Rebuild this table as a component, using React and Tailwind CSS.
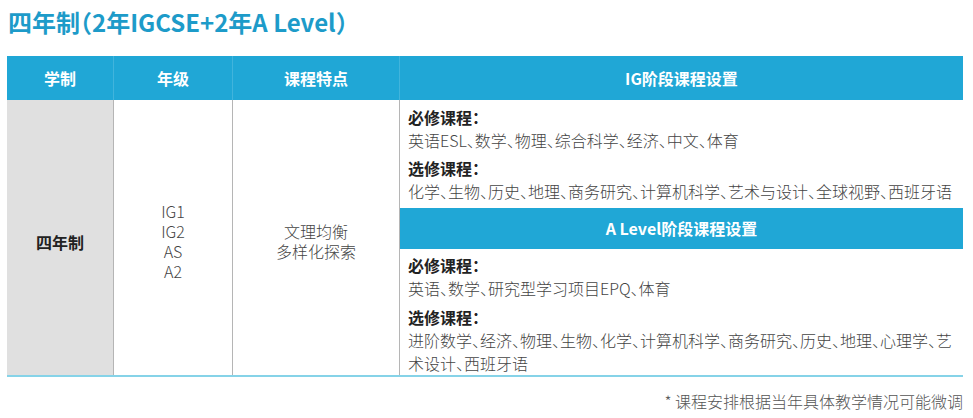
import React from "react";

const F = { fontFamily: '"Noto Sans CJK SC", "Noto Sans", sans-serif' };

export default function App() {
  return (
    <div
      className="w-[973px] h-[418px] bg-white overflow-hidden [font-feature-settings:'halt']"
      style={F}
    >
      <div className="pt-[6px] pl-[8px] text-[24px] leading-[32px] font-bold text-[#1d9bc9]">
        四年制（2年IGCSE+2年A Level）
      </div>

      <div className="ml-[7px] mt-[18px] w-[956px]">
        {/* header */}
        <div className="grid grid-cols-[107px_119px_167px_1fr] h-[44px] bg-[#20a7d6] text-white font-bold text-[16px]">
          <div className="flex items-center justify-center border-r border-white/15">学制</div>
          <div className="flex items-center justify-center border-r border-white/15">年级</div>
          <div className="flex items-center justify-center border-r border-white/15">课程特点</div>
          <div className="flex items-center justify-center">IG阶段课程设置</div>
        </div>

        {/* body */}
        <div className="grid grid-cols-[107px_119px_167px_1fr] border-b-2 border-[#86d3e8]">
          <div className="bg-[#e0e0e0] border-r border-[#b5b5b5] flex items-center justify-center pt-[9px] text-[16px] font-bold text-[#222]">
            四年制
          </div>
          <div className="border-r border-[#b5b5b5] flex flex-col items-center justify-center pt-[7px] text-[16px] leading-[20px] font-light text-[#444]">
            <div>IG1</div>
            <div>IG2</div>
            <div>AS</div>
            <div>A2</div>
          </div>
          <div className="border-r border-[#b5b5b5] flex flex-col items-center justify-center pt-[7px] text-[16px] leading-[20px] font-light text-[#444]">
            <div>文理均衡</div>
            <div>多样化探索</div>
          </div>
          <div className="flex flex-col text-[16px] leading-[23px]">
            <div className="pl-[8px] pr-[10px] pt-[6px] pb-[5px] whitespace-nowrap">
              <div className="font-bold text-[#222]">必修课程：</div>
              <div className="font-light text-[#444]">英语ESL、数学、物理、综合科学、经济、中文、体育</div>
              <div className="mt-[5px] font-bold text-[#222]">选修课程：</div>
              <div className="font-light text-[#444]">
                化学、生物、历史、地理、商务研究、计算机科学、艺术与设计、全球视野、西班牙语
              </div>
            </div>
            <div className="h-[41px] bg-[#20a7d6] flex items-center justify-center text-white font-bold">
              A Level阶段课程设置
            </div>
            <div className="pl-[8px] pr-[10px] pt-[5px] whitespace-nowrap">
              <div className="font-bold text-[#222]">必修课程：</div>
              <div className="font-light text-[#444]">英语、数学、研究型学习项目EPQ、体育</div>
              <div className="mt-[6px] font-bold text-[#222]">选修课程：</div>
              <div className="font-light text-[#444]">
                进阶数学、经济、物理、生物、化学、计算机科学、商务研究、历史、地理、心理学、艺
                <br />
                术设计、西班牙语
              </div>
            </div>
          </div>
        </div>

        <div className="mt-[13px] text-right text-[16px] leading-[22px] font-light text-[#555]">
          * 课程安排根据当年具体教学情况可能微调
        </div>
      </div>
    </div>
  );
}
